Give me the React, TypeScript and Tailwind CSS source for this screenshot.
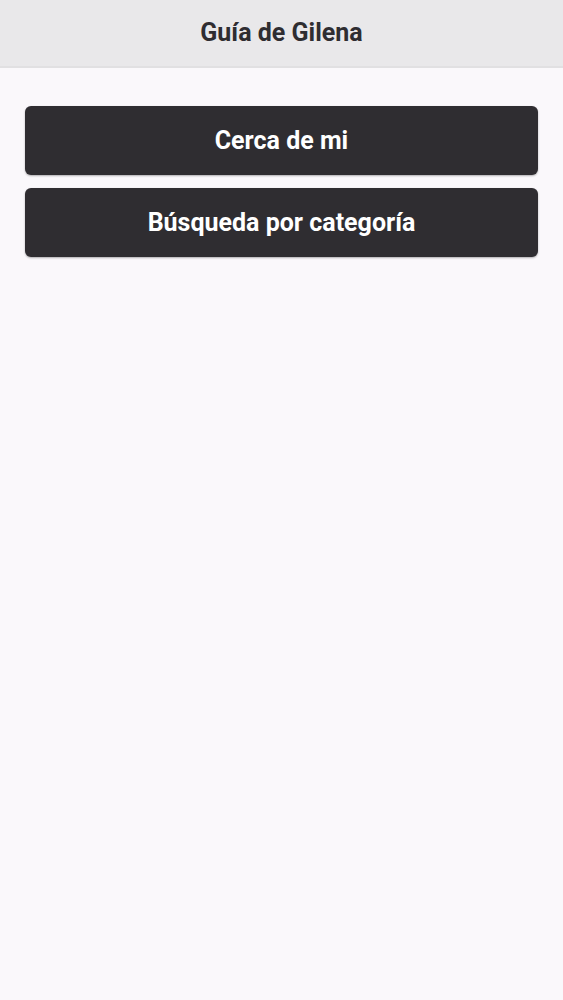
import React from 'react';

const MenuButton: React.FC<{ label: string }> = ({ label }) => (
  <button className="w-full h-[69px] rounded-[6px] bg-[#2f2d31] text-white text-[25px] font-bold shadow-[0_1px_2px_rgba(0,0,0,0.3)]">
    {label}
  </button>
);

export default function App() {
  return (
    <div className="min-h-screen bg-[#faf8fb] font-['Roboto',sans-serif]">
      <header className="h-[68px] bg-[#e9e8ea] border-b-2 border-[#e1e0e2] flex items-center justify-center">
        <h1 className="text-[25px] font-bold text-[#2f2d31]">Guía de Gilena</h1>
      </header>
      <div className="px-[25px] pt-[38px] flex flex-col gap-[13px]">
        <MenuButton label="Cerca de mi" />
        <MenuButton label="Búsqueda por categoría" />
      </div>
    </div>
  );
}
